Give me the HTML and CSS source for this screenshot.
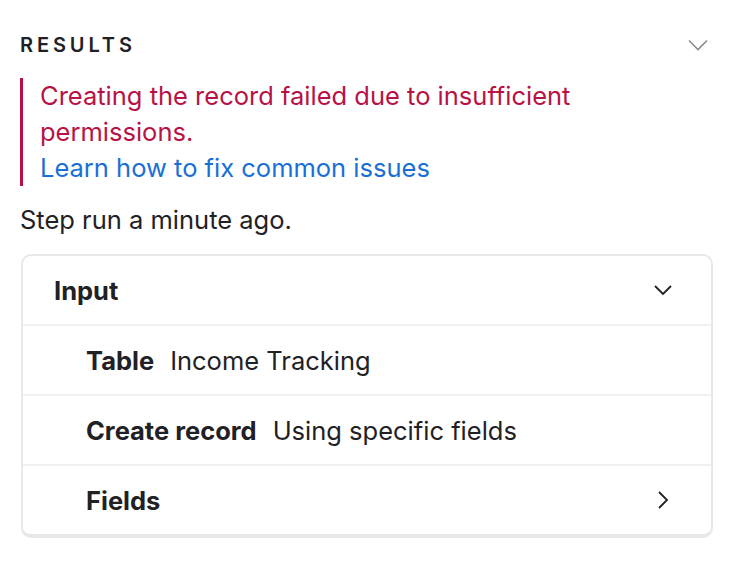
FILE: index.html
```html
<!DOCTYPE html>
<html lang="en">
<head>
  <meta charset="UTF-8" />
  <title>Results</title>
  <link rel="stylesheet" href="styles.css">
</head>
<body>
  <section class="results">
    <div class="results-header">
      <h2 class="results-title">RESULTS</h2>
      <svg class="chevron chevron-muted" width="20" height="12" viewBox="0 0 20 12" fill="none">
        <path d="M1 1.5 L10 10.5 L19 1.5" stroke="#8a8a8a" stroke-width="1.6" />
      </svg>
    </div>

    <div class="error-box">
      <p class="error-text">Creating the record failed due to insufficient permissions.</p>
      <a class="error-link" href="#">Learn how to fix common issues</a>
    </div>

    <p class="step-info">Step run a minute ago.</p>

    <div class="card">
      <div class="card-row card-head">
        <span class="row-title">Input</span>
        <svg class="chevron" width="20" height="12" viewBox="0 0 20 12" fill="none">
          <path d="M2 2 L10 10 L18 2" stroke="#1f2125" stroke-width="1.8" />
        </svg>
      </div>
      <div class="card-row sub-row">
        <span class="row-label">Table</span>
        <span class="row-value">Income Tracking</span>
      </div>
      <div class="card-row sub-row">
        <span class="row-label">Create record</span>
        <span class="row-value">Using specific fields</span>
      </div>
      <div class="card-row sub-row">
        <span class="row-label">Fields</span>
        <svg class="chevron chevron-right" width="12" height="20" viewBox="0 0 12 20" fill="none">
          <path d="M2 2 L10 10 L2 18" stroke="#1f2125" stroke-width="1.8" />
        </svg>
      </div>
    </div>
  </section>
</body>
</html>
```

FILE: styles.css
```css
body {
  margin: 0;
  background: #ffffff;
  color: #1f2125;
  font-family: 'Inter', 'Liberation Sans', sans-serif;
  font-size: 25.5px;
}
.results {
  padding: 30px 20px 0 20px;
  width: 694px;
}
.results-header {
  display: flex;
  align-items: center;
  justify-content: space-between;
  height: 30px;
  margin-bottom: 18px;
}
.results-title {
  margin: 0;
  font-size: 20px;
  font-weight: 600;
  letter-spacing: 3.9px;
  color: #1f2125;
}
.chevron-muted {
  margin-right: 6px;
}
.error-box {
  border-left: 3px solid #b81245;
  padding-left: 17px;
  line-height: 36px;
}
.error-text {
  margin: 0;
  color: #b81245;
}
.error-link {
  color: #1a6fd6;
  text-decoration: none;
}
.step-info {
  margin: 16px 0 16px 0;
  line-height: 36px;
}
.card {
  border: 2px solid #e8e8e8;
  border-bottom-width: 4px;
  border-radius: 10px;
  margin-left: 1px;
  width: 688px;
}
.card-row {
  box-sizing: border-box;
  display: flex;
  align-items: center;
  height: 70px;
  border-top: 2px solid #f0f0f0;
  padding-right: 38px;
}
.card-head {
  border-top: none;
  height: 68px;
  padding-left: 31px;
}
.row-title {
  font-weight: 700;
  flex: 1;
}
.sub-row {
  padding-left: 63px;
}
.row-label {
  font-weight: 700;
  margin-right: 16px;
}
.row-value {
  flex: 1;
}
.sub-row .row-label:only-of-type {
  flex: 1;
}
.chevron-right {
  margin-right: 4px;
}
```
